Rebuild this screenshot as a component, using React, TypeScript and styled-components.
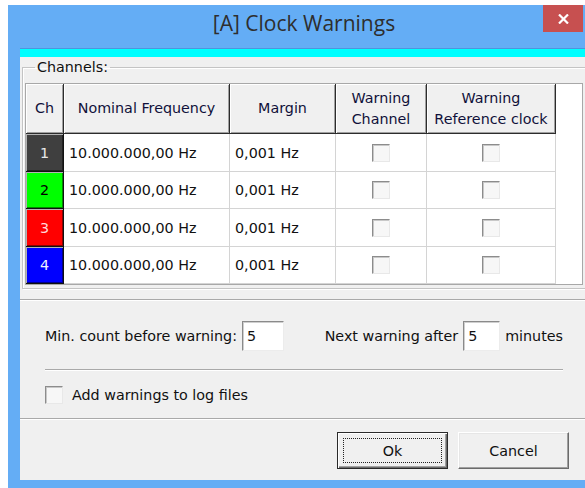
import React from 'react';
import styled, { createGlobalStyle } from 'styled-components';

type Channel = {
  id: number;
  color: string;
  ink: string;
  frequency: string;
  margin: string;
};

const channels: Channel[] = [
  { id: 1, color: '#3f3f3f', ink: '#e8e8e8', frequency: '10.000.000,00 Hz', margin: '0,001 Hz' },
  { id: 2, color: '#00ff00', ink: '#000000', frequency: '10.000.000,00 Hz', margin: '0,001 Hz' },
  { id: 3, color: '#ff0000', ink: '#ffd8d8', frequency: '10.000.000,00 Hz', margin: '0,001 Hz' },
  { id: 4, color: '#0000ff', ink: '#f0f0ff', frequency: '10.000.000,00 Hz', margin: '0,001 Hz' },
];

const GlobalStyle = createGlobalStyle`
  html, body {
    margin: 0;
    padding: 0;
    background: #ffffff;
    overflow: hidden;
  }

  body {
    font-family: 'DejaVu Sans', Tahoma, sans-serif;
    font-size: 14.3px;
    color: #111;
  }
`;

const Window = styled.div`
  width: 592px;
  margin: 5px 0 0 8px;
  padding-bottom: 8px;
  background: #64adf5;
`;

const TitleBar = styled.div`
  height: 43px;
  display: grid;
  grid-template-columns: 1fr auto 1fr;
  align-items: start;
`;

const Title = styled.div`
  grid-column: 2;
  padding-top: 4px;
  font-family: 'Open Sans', 'Noto Sans', sans-serif;
  font-size: 21px;
  color: #2e2e2e;
  white-space: nowrap;
`;

const CloseButton = styled.div`
  grid-column: 3;
  justify-self: end;
  margin-right: 17px;
  width: 40px;
  height: 27px;
  background: #c75050;
  display: flex;
  align-items: center;
  justify-content: center;
`;

const Client = styled.div`
  margin: 0 12px;
  background: #f0f0f0;
  border-top: 1px solid #4f94dc;
  display: flex;
  flex-direction: column;
`;

const AccentBar = styled.div`
  height: 8px;
  background: #00ffff;
`;

const ChannelsPanel = styled.div`
  padding: 2px 2px 10px;
`;

const GroupBox = styled.fieldset`
  margin: 0;
  padding: 7px 2px 3px;
  border: 1px solid #c4c4c4;
  box-shadow: 1px 1px 0 #ffffff, inset 1px 1px 0 #ffffff;
`;

const GroupLabel = styled.legend`
  margin-left: 10px;
  padding: 0 2px;
  line-height: 17px;
`;

const Grid = styled.div`
  display: grid;
  grid-template-columns: 38px 166px 106px 91px 129px 1fr;
  grid-template-rows: 50px 38px 37px 38px 37px;
  border: 1px solid #a8a8a8;
  background: #ffffff;
`;

const HeadCell = styled.div`
  display: flex;
  align-items: center;
  justify-content: center;
  text-align: center;
  line-height: 21px;
  background: #f0f0f0;
  border-right: 1px solid #2c2c2c;
  border-bottom: 1px solid #2c2c2c;
  box-shadow: inset 1px 1px 0 #ffffff, inset -1px -1px 0 #a0a0a0;
  color: #10103a;
  white-space: nowrap;
`;

const ChCell = styled.div<{ $color: string; $ink: string }>`
  display: flex;
  align-items: center;
  justify-content: center;
  background: ${(p) => p.$color};
  color: ${(p) => p.$ink};
  border-right: 1px solid #111;
  border-bottom: 1px solid #111;
  box-shadow: inset 1px 1px 0 #b4b4b4, inset -1px -1px 0 rgba(0, 0, 0, 0.45);
`;

const Cell = styled.div<{ $center?: boolean }>`
  display: flex;
  align-items: center;
  justify-content: ${(p) => (p.$center ? 'center' : 'flex-start')};
  padding-left: ${(p) => (p.$center ? '0' : '5px')};
  border-right: 1px solid #d4d4d4;
  border-bottom: 1px solid #d4d4d4;
  white-space: nowrap;
`;

const Filler = styled.div`
  grid-column: 6;
  grid-row: 1 / -1;
  background: #ffffff;
`;

const CheckBox = styled.span`
  display: inline-block;
  flex: none;
  box-sizing: border-box;
  width: 18px;
  height: 18px;
  background: #f7f7f7;
  border: 1px solid;
  border-color: #8c8c8c #e8e8e8 #e8e8e8 #8c8c8c;
  box-shadow: inset 1px 1px 0 #c8c8c8;
`;

const SettingsPanel = styled.div`
  border-top: 1px solid #a9a9a9;
  box-shadow: inset 0 1px 0 #ffffff;
  padding: 21px 25px 14px;
`;

const FieldRow = styled.div`
  display: flex;
  justify-content: space-between;
  align-items: center;
  height: 30px;
`;

const Field = styled.div`
  display: flex;
  align-items: center;
  gap: 5px;
`;

const NumberBox = styled.div<{ $width: number }>`
  box-sizing: border-box;
  width: ${(p) => p.$width}px;
  height: 30px;
  background: #ffffff;
  border: 1px solid;
  border-color: #8a8a8a #ececec #ececec #8a8a8a;
  box-shadow: inset 1px 1px 0 #cfcfcf;
  padding: 5px 0 0 4px;
  line-height: 18px;
`;

const Separator = styled.hr`
  margin: 18px 0 0;
  border: none;
  border-top: 1px solid #a9a9a9;
  border-bottom: 1px solid #ffffff;
`;

const CheckRow = styled.label`
  display: flex;
  align-items: center;
  gap: 9px;
  margin-top: 15px;
`;

const ButtonBar = styled.div`
  border-top: 1px solid #a9a9a9;
  box-shadow: inset 0 1px 0 #ffffff;
  padding: 13px 19px 11px;
  display: flex;
  justify-content: flex-end;
  gap: 10px;
`;

const Button = styled.div<{ $default?: boolean }>`
  box-sizing: border-box;
  width: 111px;
  height: 37px;
  display: flex;
  padding: 5px;
  background: #f0f0f0;
  border: 1px solid;
  border-color: ${(p) => (p.$default ? '#2a2a2a' : '#ffffff #6b6b6b #6b6b6b #ffffff')};
  box-shadow: ${(p) =>
    p.$default
      ? 'inset 1px 1px 0 #ffffff, inset -1px -1px 0 #6b6b6b, inset -2px -2px 0 #a0a0a0'
      : 'inset -1px -1px 0 #a0a0a0, inset 1px 1px 0 #e6e6e6'};
`;

const ButtonLabel = styled.span<{ $focus?: boolean }>`
  flex: 1;
  display: flex;
  align-items: center;
  justify-content: center;
  border: 1px dotted ${(p) => (p.$focus ? '#222' : 'transparent')};
  color: #111;
`;

const App: React.FC = () => {
  return (
    <>
      <GlobalStyle />
      <Window>
        <TitleBar>
          <Title>[A] Clock Warnings</Title>
          <CloseButton>
            <svg width='11' height='10' viewBox='0 0 11 10'>
              <path d='M1 0.5 L10 9.5 M10 0.5 L1 9.5' stroke='#ffffff' strokeWidth='2.2' />
            </svg>
          </CloseButton>
        </TitleBar>
        <Client>
          <AccentBar />
          <ChannelsPanel>
            <GroupBox>
              <GroupLabel>Channels:</GroupLabel>
              <Grid>
                <HeadCell>Ch</HeadCell>
                <HeadCell>Nominal Frequency</HeadCell>
                <HeadCell>Margin</HeadCell>
                <HeadCell>
                  Warning
                  <br />
                  Channel
                </HeadCell>
                <HeadCell>
                  Warning
                  <br />
                  Reference clock
                </HeadCell>
                <Filler />
                {channels.map((ch) => (
                  <React.Fragment key={ch.id}>
                    <ChCell $color={ch.color} $ink={ch.ink}>
                      {ch.id}
                    </ChCell>
                    <Cell>{ch.frequency}</Cell>
                    <Cell>{ch.margin}</Cell>
                    <Cell $center>
                      <CheckBox />
                    </Cell>
                    <Cell $center>
                      <CheckBox />
                    </Cell>
                  </React.Fragment>
                ))}
              </Grid>
            </GroupBox>
          </ChannelsPanel>
          <SettingsPanel>
            <FieldRow>
              <Field>
                Min. count before warning:
                <NumberBox $width={42}>5</NumberBox>
              </Field>
              <Field>
                Next warning after
                <NumberBox $width={37}>5</NumberBox>
                minutes
              </Field>
            </FieldRow>
            <Separator />
            <CheckRow>
              <CheckBox />
              Add warnings to log files
            </CheckRow>
          </SettingsPanel>
          <ButtonBar>
            <Button $default>
              <ButtonLabel $focus>Ok</ButtonLabel>
            </Button>
            <Button>
              <ButtonLabel>Cancel</ButtonLabel>
            </Button>
          </ButtonBar>
        </Client>
      </Window>
    </>
  );
};

export default App;
